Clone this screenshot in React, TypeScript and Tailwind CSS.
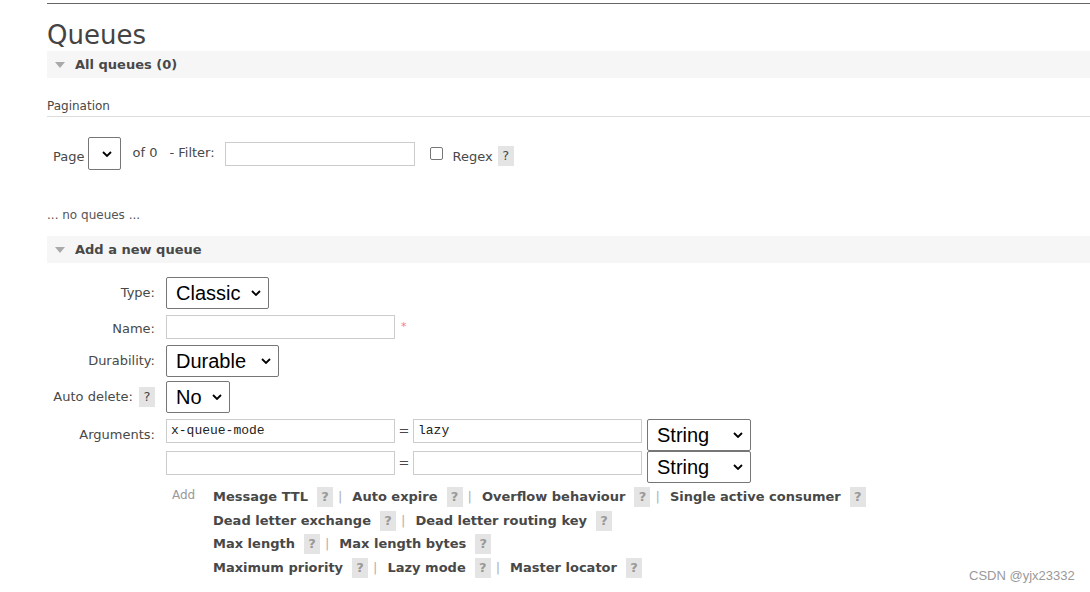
import React from "react";

const Chevron = () => (
  <svg width="10" height="6" viewBox="0 0 10 6" className="shrink-0">
    <path d="M1 1 L5 5 L9 1" fill="none" stroke="#000" strokeWidth="1.8" />
  </svg>
);

const Help = ({ dark = false }: { dark?: boolean }) => (
  <span
    className={`inline-flex h-[20px] w-[16px] shrink-0 items-center justify-center bg-[#e4e4e4] text-[13px] ${
      dark ? "text-[#484848]" : "text-[#999]"
    }`}
  >
    ?
  </span>
);

const Select = ({ value, className }: { value: string; className: string }) => (
  <div
    className={`flex h-[32px] shrink-0 items-center justify-between rounded-[2px] border border-[#767676] bg-white pl-[9px] pr-[7px] font-['Liberation_Sans',Arial,sans-serif] text-[20px] text-black ${className}`}
  >
    <span>{value}</span>
    <Chevron />
  </div>
);

const Band = ({ title }: { title: string }) => (
  <div className="flex h-[27px] items-center bg-[#f6f6f6]">
    <span className="ml-[8px] h-0 w-0 border-x-[5.5px] border-t-[6px] border-x-transparent border-t-[#aaa]" />
    <span className="ml-[10px] text-[13px] font-bold text-[#484848]">{title}</span>
  </div>
);

const Sep = () => <span className="ml-[5px] mr-[10px] text-[13px] font-normal text-[#b0b0b0]">|</span>;

const Link = ({ label }: { label: string }) => (
  <>
    <span>{label}</span>
    <span className="ml-[9px]">
      <Help />
    </span>
  </>
);

const addLines: string[][] = [
  ["Message TTL", "Auto expire", "Overflow behaviour", "Single active consumer"],
  ["Dead letter exchange", "Dead letter routing key"],
  ["Max length", "Max length bytes"],
  ["Maximum priority", "Lazy mode", "Master locator"],
];

export default function App() {
  return (
    <div className="relative h-[592px] w-[1090px] overflow-hidden bg-white pt-[3px] font-['DejaVu_Sans',Verdana,sans-serif] text-[#484848]">
      <div className="ml-[47px] border-t border-[#666]">
        <h1 className="mt-[16px] text-[26px] leading-[31px] font-normal text-[#444]">Queues</h1>
        <Band title="All queues (0)" />

        <div className="mt-[20px] border-b border-[#ddd] pb-[2px] text-[12px] leading-[16px]">Pagination</div>

        <div className="mt-[20px] flex h-[33px] items-start pl-[6px] text-[13px] leading-[16px]">
          <span className="mt-[12px]">Page</span>
          <div className="ml-[4px] flex h-[33px] w-[33px] items-center justify-end rounded-[2px] border border-[#767676] bg-white pr-[8px]">
            <Chevron />
          </div>
          <span className="ml-[11px] mt-[8px]">of 0</span>
          <span className="ml-[12px] mt-[8px]">- Filter:</span>
          <div className="ml-[10px] mt-[5px] h-[24px] w-[190px] border border-[#ccc] bg-white" />
          <div className="ml-[15px] mt-[10px] h-[13px] w-[13px] rounded-[2px] border border-[#767676] bg-white" />
          <span className="ml-[10px] mt-[12px]">Regex</span>
          <span className="ml-[5px] mt-[9px]">
            <Help dark />
          </span>
        </div>

        <div className="mt-[37px] text-[12px] leading-[16px] text-[#555]">... no queues ...</div>

        <div className="mt-[13px]">
          <Band title="Add a new queue" />
        </div>

        <div className="mt-[14px] flex flex-col text-[13px]">
          <div className="flex h-[32px] items-center">
            <div className="w-[108px] text-right">Type:</div>
            <Select value="Classic" className="ml-[11px] w-[103px]" />
          </div>

          <div className="mt-[6px] flex h-[24px] items-center">
            <div className="w-[108px] pt-[3px] text-right">Name:</div>
            <div className="ml-[11px] h-[24px] w-[229px] border border-[#ccc] bg-white" />
            <span className="ml-[6px] text-[11px] text-[#f77]">*</span>
          </div>

          <div className="mt-[6px] flex h-[32px] items-center">
            <div className="w-[108px] text-right">Durability:</div>
            <Select value="Durable" className="ml-[11px] w-[113px]" />
          </div>

          <div className="mt-[4px] flex h-[32px] items-center">
            <div className="flex w-[108px] items-center justify-end gap-[6px]">
              <span>Auto delete:</span>
              <Help dark />
            </div>
            <Select value="No" className="ml-[11px] w-[64px]" />
          </div>

          <div className="mt-[6px] flex items-start">
            <div className="flex h-[32px] w-[108px] items-center justify-end">Arguments:</div>
            <div className="ml-[11px] flex flex-col">
              {["x-queue-mode", ""].map((k, i) => (
                <div key={i} className="flex h-[32px] items-start">
                  <div className="flex h-[24px] w-[229px] items-center border border-[#ccc] bg-white pl-[4px] font-['Liberation_Mono','Courier_New',monospace] text-[13px] text-[#222]">
                    {k}
                  </div>
                  <span className="flex h-[24px] w-[18px] items-center justify-center">=</span>
                  <div className="flex h-[24px] w-[229px] items-center border border-[#ccc] bg-white pl-[4px] font-['Liberation_Mono','Courier_New',monospace] text-[13px] text-[#222]">
                    {i === 0 ? "lazy" : ""}
                  </div>
                  <Select value="String" className="ml-[5px] w-[104px]" />
                </div>
              ))}
            </div>
          </div>

          <div className="mt-[2px] flex">
            <div className="w-[108px]" />
            <div className="ml-[17px] mt-[1px] w-[41px] text-[12px] text-[#999]">Add</div>
            <div className="flex flex-col font-bold">
              {addLines.map((line, li) => (
                <div key={li} className="flex h-[23.7px] items-center whitespace-nowrap">
                  {line.map((l, i) => (
                    <React.Fragment key={l}>
                      {i > 0 && <Sep />}
                      <Link label={l} />
                    </React.Fragment>
                  ))}
                </div>
              ))}
            </div>
          </div>
        </div>
      </div>

      <div className="absolute left-[969px] top-[566px] font-['Liberation_Sans',Arial,sans-serif] text-[13px] text-[#999]">
        CSDN @yjx23332
      </div>
    </div>
  );
}
